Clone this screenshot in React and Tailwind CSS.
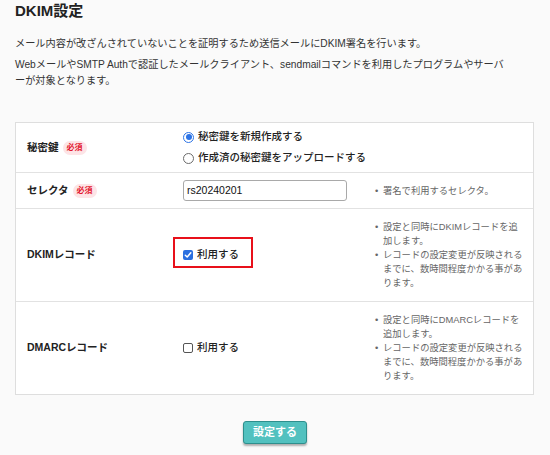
import React from "react";

const FONT = "font-['Liberation_Sans','Noto_Sans_CJK_JP',sans-serif]";

function Required() {
  return (
    <span className="ml-[4px] inline-flex h-[14px] items-center rounded-full bg-[#fde4e6] px-[4px] text-[8px] font-bold leading-none text-[#e3162e]">
      必須
    </span>
  );
}

function Radio({ checked }) {
  return checked ? (
    <span className="flex h-[11px] w-[11px] shrink-0 items-center justify-center rounded-full border-[1px] border-[#2d74e6] bg-white">
      <span className="h-[6px] w-[6px] rounded-full bg-[#2d74e6]" />
    </span>
  ) : (
    <span className="h-[11px] w-[11px] shrink-0 rounded-full border-[1px] border-[#6b6b6b] bg-white" />
  );
}

function Check({ checked }) {
  return checked ? (
    <span className="flex h-[10px] w-[10px] shrink-0 items-center justify-center rounded-[2px] bg-[#2a6fe0]">
      <svg width="8" height="8" viewBox="0 0 8 8">
        <path d="M1.3 4.2 L3.2 6 L6.8 1.8" fill="none" stroke="white" strokeWidth="1.5" strokeLinecap="round" strokeLinejoin="round" />
      </svg>
    </span>
  ) : (
    <span className="h-[10px] w-[10px] shrink-0 rounded-[2px] border-[1px] border-[#555] bg-white" />
  );
}

function Notes({ items }) {
  return (
    <div className="flex flex-col pl-[10px] text-[9.3px] leading-[14px] text-[#666]">
      {items.map((t, i) => (
        <div key={i} className="flex">
          <span className="w-[8px] shrink-0">•</span>
          <span className="w-[142px]">{t}</span>
        </div>
      ))}
    </div>
  );
}

function Row({ label, required, children, notes, className = "" }) {
  return (
    <div className={`flex items-center border-b-[1px] border-[#e2e2e2] last:border-b-0 ${className}`}>
      <div className="flex w-[155px] shrink-0 items-center pl-[11px] text-[10.5px] font-bold text-[#222]">
        {label}
        {required && <Required />}
      </div>
      <div className="w-[194px] shrink-0 whitespace-nowrap pl-[12px]">{children}</div>
      <div className="flex-1">{notes}</div>
    </div>
  );
}

export default function App() {
  const recNotes = (kind) => [
    `設定と同時に${kind}レコードを追加します。`,
    "レコードの設定変更が反映されるまでに、数時間程度かかる事があります。",
  ];
  return (
    <div className={`min-h-[455px] w-[550px] bg-[#fafafa] px-[15px] pt-[1px] text-[#222] ${FONT}`}>
      <h1 className="text-[15px] font-bold leading-[20px] text-[#222]">DKIM設定</h1>
      <p className="mt-[15px] text-[10.2px] leading-[16px] text-[#333]">
        メール内容が改ざんされていないことを証明するため送信メールにDKIM署名を行います。
      </p>
      <p className="mt-[5px] max-w-[495px] text-[10.2px] leading-[16px] text-[#333] [line-break:loose]">
        WebメールやSMTP Authで認証したメールクライアント、sendmailコマンドを利用したプログラムやサーバーが対象となります。
      </p>

      <div className="mt-[33px] mr-[1px] border-[1px] border-[#dedede] bg-white">
        <Row label="秘密鍵" required className="py-[5px]">
          <div className="flex flex-col gap-[3px] text-[10.5px] font-medium text-[#222]">
            <label className="flex h-[18px] items-center gap-[4px]">
              <Radio checked />
              <span>秘密鍵を新規作成する</span>
            </label>
            <label className="flex h-[18px] items-center gap-[4px]">
              <Radio />
              <span>作成済の秘密鍵をアップロードする</span>
            </label>
          </div>
        </Row>
        <Row
          label="セレクタ"
          required
          className="py-[7px]"
          notes={<Notes items={["署名で利用するセレクタ。"]} />}
        >
          <div className="flex h-[21px] w-[164px] items-center rounded-[3px] border-[1px] border-[#a9a9a9] bg-white px-[3px] text-[10.5px] text-[#111]">
            rs20240201
          </div>
        </Row>
        <Row label="DKIMレコード" className="py-[11px]" notes={<Notes items={recNotes("DKIM")} />}>
          <div className="relative flex items-center gap-[4px] text-[10.5px] font-medium text-[#222]">
            <Check checked />
            <span>利用する</span>
            <span className="pointer-events-none absolute left-[-10px] top-[-10px] h-[31px] w-[80px] border-[2px] border-[#e8101a]" />
          </div>
        </Row>
        <Row label="DMARCレコード" className="py-[11px]" notes={<Notes items={recNotes("DMARC")} />}>
          <div className="flex items-center gap-[4px] text-[10.5px] font-medium text-[#222]">
            <Check />
            <span>利用する</span>
          </div>
        </Row>
      </div>

      <div className="mt-[26px] flex justify-center">
        <button className="h-[23px] w-[64px] rounded-[3px] border-[1px] border-[#2e8f8d] bg-[#52c1bf] text-[11px] font-bold text-white shadow-[0_2px_2px_rgba(0,0,0,0.3)]">
          設定する
        </button>
      </div>
    </div>
  );
}
